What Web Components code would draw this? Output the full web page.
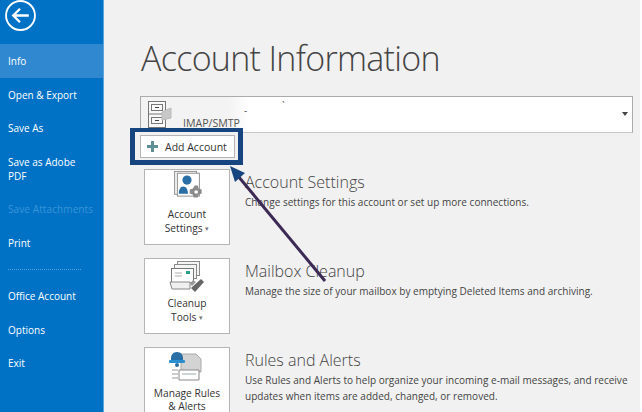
<!DOCTYPE html>
<html>
<head>
<meta charset="utf-8">
<style>
  html, body { margin: 0; padding: 0; }
  body { width: 642px; height: 412px; overflow: hidden; background: #fff; font-family: "Open Sans", "Noto Sans", sans-serif; }
  .caret { font-style: normal; font-size: 7px; color: #777; vertical-align: 1px; }
</style>
</head>
<body>
<outlook-backstage>
  <back-nav slot="nav">
    <nav-item active>Info</nav-item>
    <nav-item>Open &amp; Export</nav-item>
    <nav-item>Save As</nav-item>
    <nav-item tall>Save as Adobe PDF</nav-item>
    <nav-item disabled>Save Attachments</nav-item>
    <nav-item>Print</nav-item>
    <nav-rule></nav-rule>
    <nav-item>Office Account</nav-item>
    <nav-item>Options</nav-item>
    <nav-item>Exit</nav-item>
  </back-nav>

  <account-picker></account-picker>

  <info-row heading="Account Settings" first>
    <svg slot="icon" width="36" height="36" viewBox="0 0 36 36">
      <rect x="4.5" y="1.5" width="24" height="25" fill="#f4f4f4" stroke="#8a8a8a"/>
      <rect x="7.5" y="3.5" width="24" height="25" fill="#fff" stroke="#8a8a8a"/>
      <circle cx="18" cy="11" r="5" fill="#2a6ea6"/>
      <path d="M9 26c0-5 2-8 5-8s5 3 5 8z" fill="#2a6ea6"/>
      <path d="M27 18l2 0 1 3 3 1 0 3-3 1-1 3-3 0-1-3-3-1 0-3 3-1z" fill="#8b8b8b" stroke="#8b8b8b" stroke-width="2"/>
      <circle cx="28" cy="24" r="2" fill="#fff"/>
    </svg>
    <span slot="label">Account<br>Settings <i class="caret">▾</i></span>
    <span slot="text">Change settings for this account or set up more connections.</span>
  </info-row>

  <info-row heading="Mailbox Cleanup">
    <svg slot="icon" width="36" height="32" viewBox="0 0 36 32">
      <rect x="8.5" y="1.5" width="22" height="14" fill="#f4f4f4" stroke="#8a8a8a"/>
      <rect x="5.500" y="4.500" width="22" height="14" fill="#f4f4f4" stroke="#8a8a8a"/>
      <rect x="2.500" y="8.500" width="22" height="14" fill="#fff" stroke="#777"/>
      <rect x="17" y="11" width="4" height="3" fill="#2b9a8d"/>
      <path d="M6 13h7M6 16h7" stroke="#aaa"/>
      <path d="M1 22h20v7H3z" fill="#f0f0f0" stroke="#888"/>
      <path d="M22 28l10-9 3 3-9 10z" fill="#666"/>
      <path d="M24 20l3 2-4 4-2-2z" fill="#999"/>
    </svg>
    <span slot="label">Cleanup<br>Tools <i class="caret">▾</i></span>
    <span slot="text">Manage the size of your mailbox by emptying Deleted Items and archiving.</span>
  </info-row>

  <info-row heading="Rules and Alerts" clipped>
    <svg slot="icon" width="36" height="32" viewBox="0 0 36 32">
      <path d="M12 4h15l5 5v13H12z" fill="#d3d3d3" stroke="#aaa"/>
      <path d="M10 20h20v10H10z" fill="#fff" stroke="#888"/>
      <path d="M13 24h14" stroke="#9aa"/>
      <path d="M3 20h6M3 24h6M3 28h6" stroke="#999"/>
      <path d="M8 2c4 0 6 3 6 6v3H2V8c0-3 2-6 6-6z" fill="#2a6ea6"/>
      <rect x="0" y="10" width="16" height="3" rx="1" fill="#2a8fd0"/>
      <circle cx="8" cy="15" r="2" fill="#2a6ea6"/>
    </svg>
    <span slot="label">Manage Rules<br>&amp; Alerts</span>
    <span slot="text">Use Rules and Alerts to help organize your incoming e-mail messages, and receive updates when items are added, changed, or removed.</span>
  </info-row>

  <add-account-callout slot="overlay"></add-account-callout>
</outlook-backstage>

<script>
const defineEl = (name, html, init) => {
  const template = document.createElement('template')
  template.innerHTML = html
  customElements.define(name, class extends HTMLElement {
    constructor() {
      super()
      this.attachShadow({ mode: 'open' }).appendChild(template.content.cloneNode(true))
      if (init) init(this)
    }
  })
}

defineEl('outlook-backstage', `
  <style>
    :host { display: flex; position: relative; width: 640px; height: 412px; overflow: hidden; background: #f1f1f1; border-right: 2px solid #fff; }
    main { flex: 1; min-width: 0; padding: 0 0 0 36px; }
    h1 { margin: 0 0 0 1px; padding-top: 36px; height: 96px; box-sizing: border-box; font: 300 34px/44px "Open Sans", sans-serif; letter-spacing: -.7px; color: #444; white-space: nowrap; }
  </style>
  <slot name="nav"></slot>
  <main>
    <h1>Account Information</h1>
    <slot></slot>
  </main>
  <slot name="overlay"></slot>
`)

defineEl('back-nav', `
  <style>
    :host { display: block; width: 104px; height: 412px; flex: none; box-sizing: border-box; padding-top: 44px; position: relative; background: #0072c6; border-right: 1px solid #5aa5dd; }
    button { position: absolute; left: 5px; top: 0; width: 31px; height: 31px; padding: 0; border: 0; background: none; }
  </style>
  <button aria-label="Back">
    <svg width="31" height="31" viewBox="0 0 30 30" fill="none" stroke="#fff">
      <circle cx="15" cy="15" r="14" stroke-width="1.8"/>
      <path d="M23 15H8M14.500 8.500L8 15l6.500 6.500" stroke-width="2.300"/>
    </svg>
  </button>
  <slot></slot>
`)

defineEl('nav-item', `
  <style>
    :host { display: flex; align-items: center; box-sizing: border-box; height: 33.500px; padding: 0 12px 0 8px; font: 400 10px/14px "Open Sans", sans-serif; color: #fff; }
    :host([active]) { height: 34px; background: #3089d0; }
    :host([tall]) { height: 47px; }
    :host([disabled]) { color: #3a94d8; height: 34px; letter-spacing: .1px; white-space: nowrap; }
  </style>
  <span><slot></slot></span>
`)

defineEl('nav-rule', `
  <style>
    :host { display: block; width: 73px; height: 0; margin: 9px 0 10px 8px; border-top: 1px dotted #5aa5dd; }
  </style>
`)

defineEl('account-picker', `
  <style>
    :host { display: flex; position: relative; box-sizing: border-box; width: 493px; height: 37px; border: 1px solid #ababab; border-bottom-color: #c6c6c6; background: linear-gradient(90deg, #f3f3f3 0, #f3f3f3 88px, #fff 108px); }
    svg.drawers { position: absolute; left: 7px; top: 4px; }
    .type { position: absolute; left: 42px; top: 19px; font: 400 10.600px/14px "Open Sans", sans-serif; color: #555; white-space: nowrap; }
    .mark { position: absolute; font: 400 10px/10px "Open Sans", sans-serif; color: #555; }
    i { position: absolute; right: 4px; top: 15px; width: 0; height: 0; border: 3.500px solid transparent; border-top: 4px solid #444; border-bottom: 0; }
  </style>
  <svg class="drawers" width="24" height="27" viewBox="0 0 24 27" fill="none" stroke="#777">
    <rect x=".5" y=".5" width="17" height="26" fill="#f8f8f8"/>
    <path d="M.5 13h17"/>
    <rect x="3.500" y="3.500" width="11" height="6"/>
    <rect x="3.500" y="16.500" width="11" height="6"/>
    <path d="M7 6.500h4M7 19.500h4" stroke="#444"/>
    <path d="M14 11l9-4v10l-9 2z" fill="#c8c8c8" stroke="#bbb"/>
  </svg>
  <span class="mark" style="left:103px;top:8px">-</span>
  <span class="mark" style="left:141px;top:4px">\`</span>
  <span class="type">IMAP/SMTP</span>
  <i></i>
`)

defineEl('info-row', `
  <style>
    :host { display: flex; margin: 13px 0 0 4px; height: 76px; }
    :host([first]) { margin-top: 36px; }
    .card { flex: none; box-sizing: border-box; width: 86px; height: 76px; display: flex; flex-direction: column; align-items: center; justify-content: flex-end; padding-bottom: 8px; gap: 4px; background: #fff; border: 1px solid #b5b5b5; font: 400 10.200px/14px "Open Sans", sans-serif; color: #333; text-align: center; white-space: nowrap; }
    :host([clipped]) .card { height: 90px; justify-content: flex-start; padding: 2px 0 0; gap: 5px; line-height: 12.500px; }
    :host([clipped]) ::slotted(span[slot="label"]) { line-height: 12.500px; }
    .copy { margin-left: 15px; width: 388px; }
    h2 { margin: 0; padding-top: 3px; font: 300 16px/21px "Open Sans", sans-serif; color: #444; white-space: nowrap; }
    p { margin: 1px 0 0; font: 400 10px/16px "Open Sans", sans-serif; letter-spacing: .02px; color: #444; }
    ::slotted(span[slot="label"]) { display: block; line-height: 14px; }
  </style>
  <div class="card">
    <slot name="icon"></slot>
    <slot name="label"></slot>
  </div>
  <div class="copy">
    <h2></h2>
    <p><slot name="text"></slot></p>
  </div>
`, (el) => { el.shadowRoot.querySelector('h2').textContent = el.getAttribute('heading') })

defineEl('add-account-callout', `
  <style>
    :host { display: block; position: absolute; left: 0; top: 0; width: 640px; height: 412px; pointer-events: none; }
    .box { position: absolute; left: 130px; top: 128px; box-sizing: border-box; width: 113px; height: 37px; padding: 3px 3px 2px 5px; background: #f1f1f1; border-style: solid; border-color: #17457f; border-width: 4px 5px 5px; }
    .btn { box-sizing: border-box; height: 100%; display: flex; align-items: center; gap: 7px; padding-left: 6px; width: 95px; background: #fff; border: 1px solid #b5b5b5; font: 400 10.500px/14px "Open Sans", sans-serif; color: #333; white-space: nowrap; }
    .arrow { position: absolute; left: 0; top: 0; }
  </style>
  <div class="box">
    <div class="btn">
      <svg width="11" height="11" viewBox="0 0 11 11"><path d="M4 0h3v4h4v3H7v4H4V7H0V4h4z" fill="#5f8f95"/></svg>
      Add Account
    </div>
  </div>
  <svg class="arrow" width="640" height="412" viewBox="0 0 640 412">
    <path d="M325 281L238 176" stroke="#3c2a55" stroke-width="3" fill="none"/>
    <path d="M230 166L245 173L235 182z" fill="#17457f"/>
  </svg>
`)
</script>
</body>
</html>
